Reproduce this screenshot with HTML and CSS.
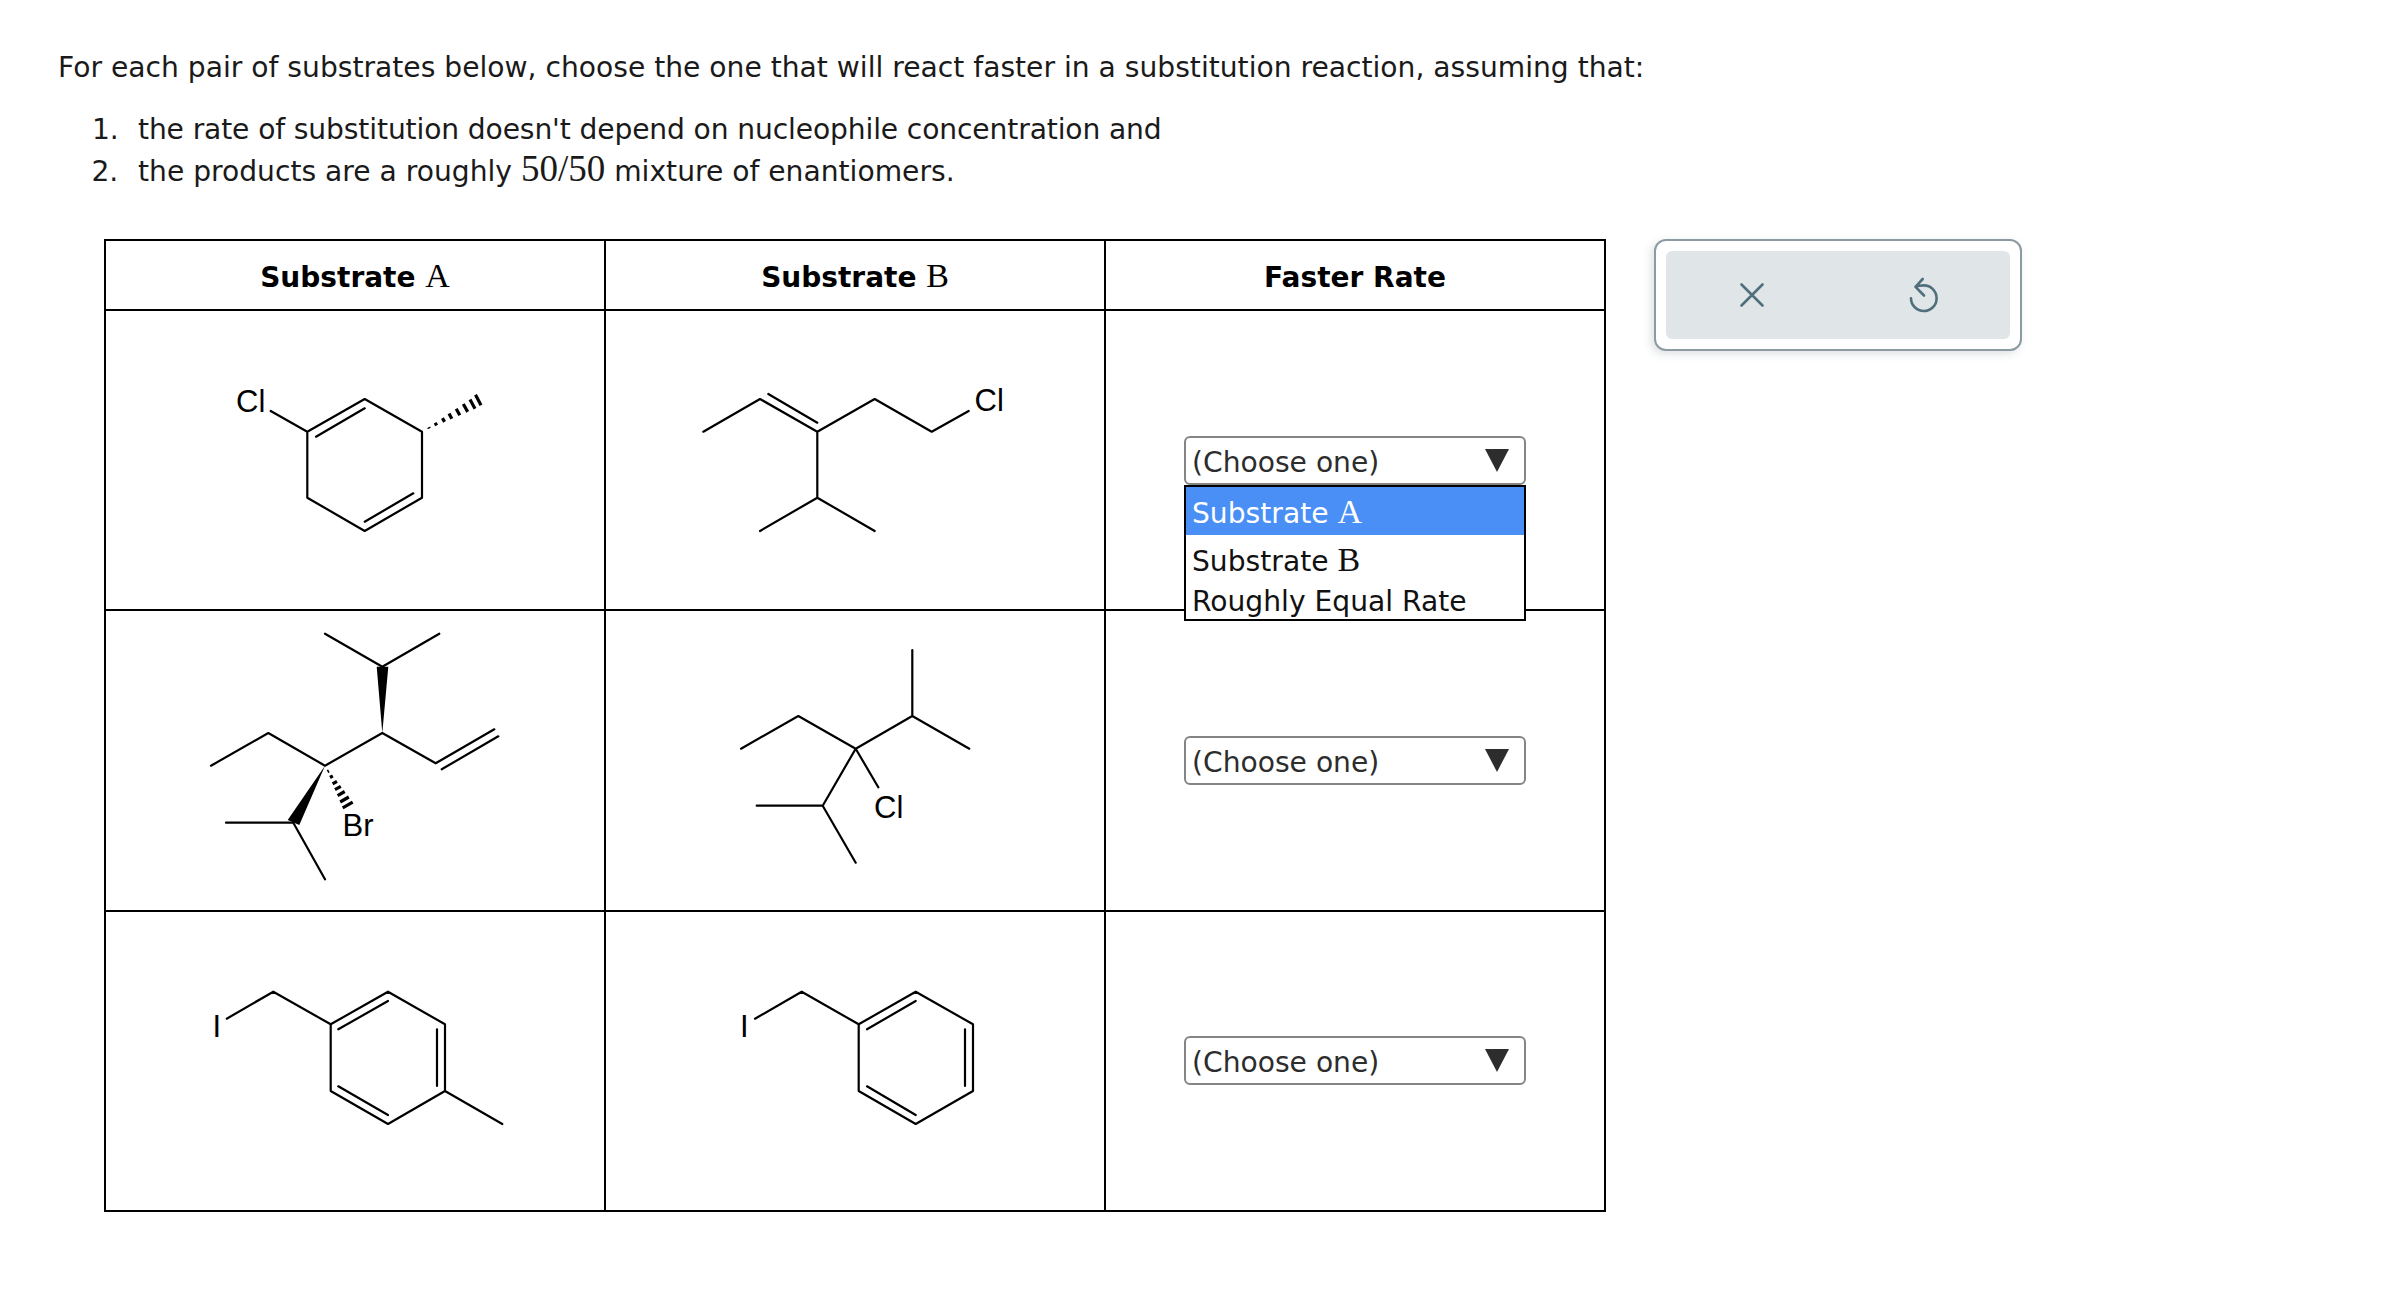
FILE: index.html
```html
<!DOCTYPE html>
<html lang="en">
<head>
<meta charset="utf-8">
<title>Substitution reaction rates</title>
<link rel="stylesheet" href="styles.css">
</head>
<body>
<main class="page">
  <p class="intro">For each pair of substrates below, choose the one that will react faster in a substitution reaction, assuming that:</p>
  <ol class="conditions">
    <li class="cond-tight">the rate of substitution doesn't depend on nucleophile concentration and</li>
    <li>the products are a roughly <span class="math math-num">50/50</span> mixture of enantiomers.</li>
  </ol>
  <div class="workspace">
    <table class="grid">
      <colgroup><col class="col"><col class="col"><col class="col"></colgroup>
      <thead>
        <tr>
          <th>Substrate <span class="math">A</span></th>
          <th>Substrate <span class="math">B</span></th>
          <th>Faster Rate</th>
        </tr>
      </thead>
      <tbody>
        <tr>
          <td>
            <svg class="mol" viewBox="106 311 498 298">
              <text class="atom" x="236" y="412">Cl</text>
              <path class="bond" d="M270.7 411 L307.3 431.7 M307.3 431.7 L364.7 399 L422 431.7 L422 497.7 L364.7 531 L307.3 497.7 Z M316 436.7 L364.7 408.3 M364.7 521.7 L413.3 493.3"/>
              <path class="hash" d="M429.3 428.5 L428.7 427.3 M436.6 425.4 L435.2 422.8 M444.6 421.9 L442.4 418.1 M451.8 418.8 L449 413.6 M459.8 415.3 L456.2 408.7 M467.7 411.9 L463.3 404 M475 408.7 L470 399.5 M481 405.3 L475.5 394.7"/>
            </svg>
          </td>
          <td>
            <svg class="mol" viewBox="606 311 498 298">
              <text class="atom" x="974.5" y="411">Cl</text>
              <path class="bond" d="M703.3 431.7 L760 399 L817.3 431.7 L874.7 399 L931.7 431.7 L968.7 411 M768.3 394 L817.3 422.7 M817.3 431.7 L817.3 497.7 M760 531 L817.3 497.7 L874.7 531"/>
            </svg>
          </td>
          <td class="answer">
            <div class="select"><span>(Choose one)</span><i class="caret"></i></div>
            <ul class="menu">
              <li class="opt opt-on">Substrate <span class="math">A</span></li>
              <li class="opt opt-b">Substrate <span class="math">B</span></li>
              <li class="opt opt-c">Roughly Equal Rate</li>
            </ul>
          </td>
        </tr>
        <tr>
          <td>
            <svg class="mol" viewBox="106 611 498 298">
              <path class="bond" d="M211 765.7 L268.3 733 L325 765.7 L382.3 733 L435.7 763.3 L494.3 729.3 M441.7 769.3 L498.3 736.3 M325 633.7 L382.3 666.7 L439.3 633.7 M226 822.7 L293.3 822.7 L325 879.3"/>
              <path class="solid" d="M382.3 733 L376.7 666.7 L388.3 666.7 Z M325 765.7 L287.7 820 L299.3 825 Z"/>
              <path class="hash" d="M328.9 770.8 L327.5 771.6 M332.8 775.9 L330 777.5 M337 781.4 L332.6 783.9 M340.8 786.4 L335 789.7 M344.7 791.5 L337.6 795.7 M348.8 797 L340.2 802 M352.7 802.1 L342.7 807.9"/>
              <text class="atom" x="342.5" y="836">Br</text>
            </svg>
          </td>
          <td>
            <svg class="mol" viewBox="606 611 498 298">
              <path class="bond" d="M741 748.7 L798.3 716 L855.7 748.7 L912.3 716 L969.3 748.7 M912.3 650 L912.3 716 M855.7 748.7 L878.3 787.3 M855.7 748.7 L822.7 805.7 L756.7 805.7 M822.7 805.7 L855.7 862.7"/>
              <text class="atom" x="874" y="818">Cl</text>
            </svg>
          </td>
          <td class="answer">
            <div class="select"><span>(Choose one)</span><i class="caret"></i></div>
          </td>
        </tr>
        <tr>
          <td>
            <svg class="mol" viewBox="106 911 498 298">
              <text class="atom" x="212.5" y="1036">I</text>
              <path class="bond" d="M226.7 1017.7 L273.3 990.7 L330.7 1023.3 M330.7 1023.3 L388 990.7 L445 1023.3 L445 1090 L388 1123 L330.7 1090 Z M445 1090 L502.3 1123 M338.3 1028.3 L388 1000 M437 1028.3 L437 1085 M338.3 1085.3 L388 1114"/>
            </svg>
          </td>
          <td>
            <svg class="mol" viewBox="606 911 498 298">
              <text class="atom" x="740" y="1036">I</text>
              <path class="bond" d="M755 1017.7 L801.7 990.7 L858.7 1023.3 M858.7 1023.3 L915.7 990.7 L973 1023.3 L973 1090 L915.7 1123 L858.7 1090 Z M867 1028.3 L915.7 1000 M965 1028.3 L965 1085 M867 1085.3 L915.7 1114"/>
            </svg>
          </td>
          <td class="answer">
            <div class="select"><span>(Choose one)</span><i class="caret"></i></div>
          </td>
        </tr>
      </tbody>
    </table>
    <aside class="tools">
      <div class="tools-inner">
        <button class="tool" type="button" aria-label="Clear">
          <svg class="tool-icon" viewBox="0 0 36 36"><path d="M7.5 7.5 L28.5 28.5 M28.5 7.5 L7.5 28.5"/></svg>
        </button>
        <button class="tool" type="button" aria-label="Undo">
          <svg class="tool-icon" viewBox="266 52.5 36 36"><path d="M282.7 54.5 L275.5 62.3 L284 71 M275.5 62.3 C278 61.2 281 60.9 283.7 60.9 A12.8 12.8 0 1 1 271 73.7"/></svg>
        </button>
      </div>
    </aside>
  </div>
</main>
</body>
</html>
```
FILE: styles.css
```css
* { box-sizing: border-box; }
html, body { margin: 0; background: #fff; }
body {
  color: #1a1a1a;
  font-family: "DejaVu Sans", Verdana, sans-serif;
  font-size: 28.16px;
}
.page { padding: 44px 0 0 58px; }
.intro { margin: 0; line-height: 48px; }
.conditions { margin: 17px 0 0; padding: 0 0 0 80px; }
.conditions li { line-height: 42px; }
.conditions li::marker { content: counter(list-item) ".\2002\2009"; }
.cond-tight { letter-spacing: -.13px; }
.math { font-family: "Liberation Serif", serif; font-size: 34px; line-height: 0; }
.math-num { font-size: 37px; }
.workspace { display: flex; align-items: flex-start; margin: 46px 0 0 46px; }
.grid {
  border-collapse: collapse;
  table-layout: fixed;
  width: 1502px;
  color: #000;
}
.col { width: 500px; }
.grid th, .grid td { border: 2px solid #000; padding: 0; text-align: center; }
.grid th { height: 70px; padding-top: 4px; font-size: 28px; font-weight: 700; }
.grid th .math { font-weight: 400; }
.grid td { height: 300px; }
.grid tbody tr:nth-child(n+2) td { height: 300.5px; }
.mol { display: block; width: 498px; height: 298px; margin: 0 auto; }
.bond { fill: none; stroke: #000; stroke-width: 2.2; stroke-linecap: round; stroke-linejoin: round; }
.solid { fill: #000; stroke: none; }
.hash { fill: none; stroke: #000; stroke-width: 3.2; }
.atom { font-family: "Liberation Sans", Arial, sans-serif; font-size: 31px; fill: #000; }
.answer { position: relative; }
.select {
  display: flex;
  align-items: center;
  justify-content: space-between;
  width: 342px;
  height: 49px;
  margin: 0 auto;
  padding: 4px 15px 0 6px;
  border: 2px solid #858585;
  border-radius: 6px;
  background: #fff;
  color: #2d2d2d;
  text-align: left;
}
.caret {
  width: 0;
  height: 0;
  margin-top: -4px;
  border-left: 12px solid transparent;
  border-right: 12px solid transparent;
  border-top: 23px solid #2d2d2d;
}
.menu {
  position: absolute;
  z-index: 2;
  top: 174px;
  left: 78px;
  width: 342px;
  height: 136px;
  margin: 0;
  padding: 0;
  list-style: none;
  border: 2px solid #000;
  background: #fff;
  color: #111;
  text-align: left;
  overflow: hidden;
}
.opt { padding-left: 6px; }
.opt-on { height: 48px; line-height: 53px; background: #4a8ff5; color: #fff; }
.opt-b { height: 44px; line-height: 54px; }
.opt-c { height: 40px; line-height: 46px; }
.tools {
  margin: 0 0 0 48px;
  width: 368px;
  height: 112px;
  padding: 10px;
  border: 2px solid #8b9ba1;
  border-radius: 12px;
  background: #fff;
  box-shadow: -3px 3px 8px rgba(70, 90, 100, .18);
}
.tools-inner { display: flex; height: 100%; border-radius: 6px; background: #e0e5e8; }
.tool { flex: 1; display: flex; align-items: center; justify-content: center; padding: 0; border: 0; background: none; }
.tool-icon { display: block; width: 36px; height: 36px; }
.tool-icon path { fill: none; stroke: #4f6f7c; stroke-width: 2.6; stroke-linecap: round; stroke-linejoin: round; }
```
